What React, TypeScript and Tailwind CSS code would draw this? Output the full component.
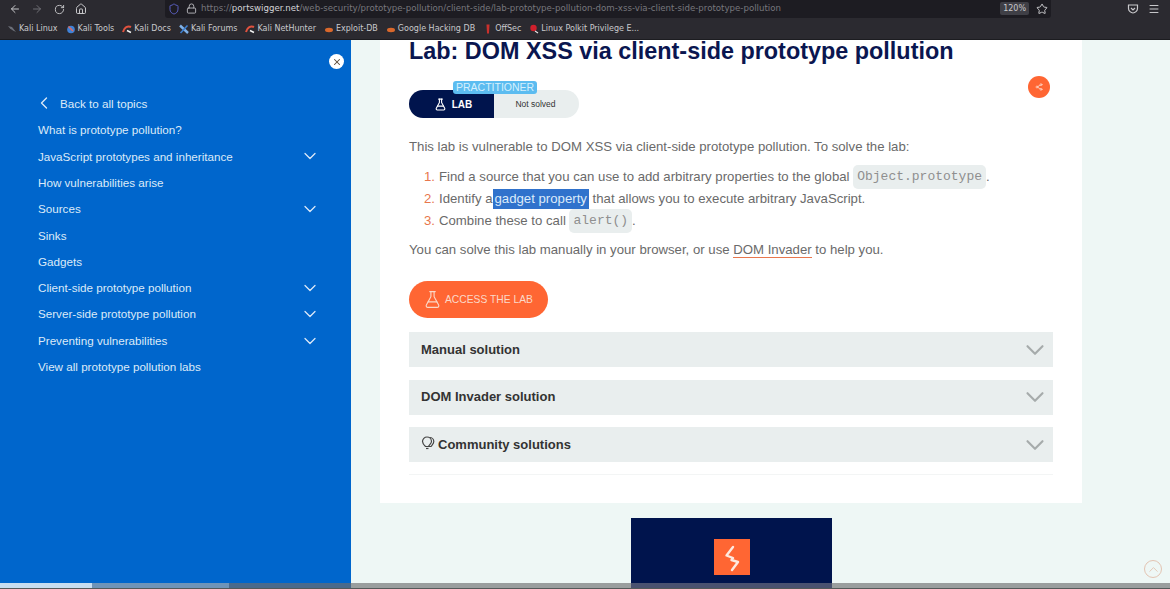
import { ArrowLeft, ArrowRight, RotateCw, Home, Lock, Star, Menu, Shield, ChevronLeft, ChevronDown, ChevronUp, FlaskConical, Share2, X } from "lucide-react";

const bookmarks = [
  { name: "Kali Linux", icon: "dragon" },
  { name: "Kali Tools", icon: "tools" },
  { name: "Kali Docs", icon: "arc" },
  { name: "Kali Forums", icon: "forum" },
  { name: "Kali NetHunter", icon: "arc" },
  { name: "Exploit-DB", icon: "bug" },
  { name: "Google Hacking DB", icon: "bug" },
  { name: "OffSec", icon: "offsec" },
  { name: "Linux Polkit Privilege E...", icon: "polkit" },
];

const topics = [
  { name: "What is prototype pollution?", more: false },
  { name: "JavaScript prototypes and inheritance", more: true },
  { name: "How vulnerabilities arise", more: false },
  { name: "Sources", more: true },
  { name: "Sinks", more: false },
  { name: "Gadgets", more: false },
  { name: "Client-side prototype pollution", more: true },
  { name: "Server-side prototype pollution", more: true },
  { name: "Preventing vulnerabilities", more: true },
  { name: "View all prototype pollution labs", more: false },
];

function Favicon({ icon }: { icon: string }) {
  return (
    <svg width="10" height="10" viewBox="0 0 10 10" fill="none">
      {icon === "dragon" && <path d="M1 2 L5 3 L9 8 L6 6.5 L3 4.5 Z" fill="#6b6f78" />}
      {icon === "tools" && (
        <>
          <circle cx="5" cy="5.5" r="3.8" fill="#3f82d8" />
          <path d="M2.5 2.5 L7 7" stroke="#e26a5a" strokeWidth="1.4" />
        </>
      )}
      {icon === "arc" && (
        <>
          <path d="M1 8 C2 3 6 1.5 9 3" stroke="#e0523f" strokeWidth="2" />
          <path d="M5 6.5 L9 8.5" stroke="#f2f2f2" strokeWidth="1.4" />
        </>
      )}
      {icon === "forum" && (
        <>
          <path d="M1 1.5 L9 9" stroke="#7fb2ea" strokeWidth="2.4" />
          <path d="M8.5 1.5 L1.5 9" stroke="#3d7fd0" strokeWidth="1.6" />
        </>
      )}
      {icon === "bug" && <ellipse cx="5" cy="6" rx="4" ry="2.2" fill="#d9682c" />}
      {icon === "offsec" && <path d="M3.5 0.5 H6.5 L6 9.5 H4 Z" fill="#c9302c" />}
      {icon === "polkit" && (
        <>
          <circle cx="4.5" cy="4" r="3.2" fill="#d0202c" />
          <path d="M6 7 L9 9" stroke="#e8e8e8" strokeWidth="1.2" />
        </>
      )}
    </svg>
  );
}

function Browser() {
  return (
    <div className="relative z-10 h-[40px] shrink-0 bg-[#2b2a30] text-[#c9c9cc] border-b border-[#1c1c20]">
      <div className="h-[18px] flex items-center pl-[9px] pr-[10px]">
        <ArrowLeft size={12} />
        <ArrowRight size={12} className="ml-[10px] text-[#6f6f75]" />
        <RotateCw size={11} className="ml-[11px]" />
        <Home size={12} className="ml-[10px]" />
        <div className="ml-[78px] w-[887px] h-[18px] -mt-[1px] bg-[#1d1c22] rounded-b-[3px] flex items-center pl-[3px] pr-[3px]">
          <Shield size={12} className="text-[#5a5fc0]" />
          <Lock size={11} className="ml-[6px] text-[#b8b8bc]" />
          <span className="ml-[4px] text-[8.65px] text-[#77777d] whitespace-nowrap font-['DejaVu_Sans',sans-serif]">
            https://<span className="text-[#d5d5d8]">portswigger.net</span>/web-security/prototype-pollution/client-side/lab-prototype-pollution-dom-xss-via-client-side-prototype-pollution
          </span>
          <span className="ml-auto bg-[#3f3f46] px-[3px] h-[13px] flex items-center text-[8px] rounded-[2px] font-['DejaVu_Sans',sans-serif]">120%</span>
          <Star size={12} className="ml-[7px]" />
        </div>
        <svg width="12" height="12" viewBox="0 0 12 12" fill="none" stroke="currentColor" strokeWidth="1.2" className="ml-[76px]">
          <path d="M1.5 2 H10.5 V5.5 C10.5 8 8 10 6 10 C4 10 1.5 8 1.5 5.5 Z" />
          <path d="M4 5 L6 7 L8 5" />
        </svg>
        <Menu size={12} className="ml-[9px]" />
      </div>
      <div className="h-[21px] flex items-center pl-[7px] gap-[8px] text-[8px] font-['DejaVu_Sans',sans-serif] whitespace-nowrap">
        {bookmarks.map((b) => (
          <div key={b.name} className="flex items-center gap-[2px]">
            <Favicon icon={b.icon} />
            <span>{b.name}</span>
          </div>
        ))}
      </div>
    </div>
  );
}

function Sidebar() {
  return (
    <aside className="relative w-[351px] shrink-0 bg-[#0066cc] text-[#dceaf8] text-[11.65px] pt-[56px] pl-[38px] pr-[31px]">
      <button className="absolute left-[329px] top-[14px] w-[15px] h-[15px] rounded-full bg-white flex items-center justify-center">
        <X size={10} strokeWidth={2.5} className="text-[#5a4a3a]" />
      </button>
      <div className="h-[16px] flex items-center">
        <ChevronLeft size={20} strokeWidth={1.6} className="-ml-[4.5px] -mt-[3px]" />
        <span className="ml-[6.5px]">Back to all topics</span>
      </div>
      <ul className="mt-[5px] flex flex-col">
        {topics.map((t) => (
          <li key={t.name} className="h-[26.3px] flex items-center justify-between">
            <span>{t.name}</span>
            {t.more && <ChevronDown size={20} strokeWidth={1.5} />}
          </li>
        ))}
      </ul>
    </aside>
  );
}

function Accordion({ label, bulb }: { label: string; bulb?: boolean }) {
  return (
    <div className="h-[35px] bg-[#e9eeee] pl-[12px] pr-[3px] flex items-center justify-between text-[#333333] font-bold text-[13px]">
      <span className="flex items-center gap-[3px]">
        {bulb && (
          <svg width="14" height="14" viewBox="0 0 14 14" fill="none" stroke="#444444" strokeWidth="1.2" className="-mt-[4px]">
            <path d="M4.5 10.5 C3 9 1.5 7.5 1.5 5.5 C1.5 3 3.5 1 6 1 C8.5 1 10.5 3 10.5 5.5 C10.5 7.5 8 9 7.5 10.5 Z" />
            <path d="M8.5 1.5 C11 1.5 12.8 3.3 12.8 5.5 C12.8 7.5 11 9 10 10.5 H7.5" />
            <path d="M5 12.5 H7.5" />
          </svg>
        )}
        {label}
      </span>
      <ChevronDown size={30} strokeWidth={1.7} className="text-[#a6abab]" />
    </div>
  );
}

function Code({ children }: { children: string }) {
  return (
    <code className="inline-block bg-[#e9eeee] text-[#8f8f8f] rounded-[5px] px-[4px] h-[24px] leading-[24px] text-[13px] font-['Liberation_Mono',monospace]">
      {children}
    </code>
  );
}

function Card() {
  return (
    <section className="relative w-[702px] ml-[29px] h-[463px] bg-white pl-[29px] pr-[29px] text-[13.2px] text-[#6a6a6a]">
      <h1 className="text-[23.4px] leading-[22px] font-bold text-[#0a1650] whitespace-nowrap">
        Lab: DOM XSS via client-side prototype pollution
      </h1>
      <button className="absolute right-[32px] top-[36px] w-[22px] h-[22px] rounded-full bg-[#ff6633] flex items-center justify-center">
        <Share2 size={8} className="text-[#fde4da]" />
      </button>

      <div className="relative mt-[28px] h-[28px] w-[170px] flex text-[8.5px]">
        <span className="absolute left-[44px] -top-[9px] h-[13px] px-[3px] bg-[#5cbcf0] text-[#d6f0fd] rounded-[3px] text-[10.5px] leading-[13px]">
          PRACTITIONER
        </span>
        <div className="w-[85px] bg-[#00144d] text-white rounded-l-full flex items-center justify-center gap-[5px] font-bold text-[10px] pl-[3px]">
          <FlaskConical size={13} />
          LAB
        </div>
        <div className="w-[85px] bg-[#e9eeee] text-[#333333] rounded-r-full flex items-center justify-center pr-[2px]">
          Not solved
        </div>
      </div>

      <p className="mt-[19px] leading-[20px]">This lab is vulnerable to DOM XSS via client-side prototype pollution. To solve the lab:</p>
      <ol className="mt-[8px] pl-[15px] flex flex-col">
        <li className="h-[24px] flex items-center whitespace-pre">
          <span className="text-[#e8774d] w-[15px]">1.</span>
          Find a source that you can use to add arbitrary properties to the global <Code>Object.prototype</Code>.
        </li>
        <li className="h-[20px] flex items-center whitespace-pre">
          <span className="text-[#e8774d] w-[15px]">2.</span>
          Identify a<span className="bg-[#3072cc] text-[#dcebfa] px-[2px]">gadget property</span> that allows you to execute arbitrary JavaScript.
        </li>
        <li className="h-[24px] flex items-center whitespace-pre">
          <span className="text-[#e8774d] w-[15px]">3.</span>
          Combine these to call <Code>alert()</Code>.
        </li>
      </ol>
      <p className="mt-[7px] leading-[20px]">
        You can solve this lab manually in your browser, or use{" "}
        <span className="border-b border-[#e8774d]">DOM Invader</span> to help you.
      </p>

      <button className="mt-[21px] w-[139px] h-[37px] rounded-full bg-[#ff6633] text-[#fbd9c8] text-[10.3px] flex items-center pl-[14px] gap-[3px]">
        <FlaskConical size={19} strokeWidth={1.4} />
        ACCESS THE LAB
      </button>

      <div className="mt-[14px] flex flex-col gap-[12.5px]">
        <Accordion label="Manual solution" />
        <Accordion label="DOM Invader solution" />
        <Accordion label="Community solutions" bulb />
      </div>
      <div className="mt-[12px] h-px bg-[#f3f5f5]" />
    </section>
  );
}

function Sponsor() {
  return (
    <div className="mt-[15px] ml-[280px] w-[201px] h-[71px] bg-[#00144d] flex justify-center pt-[21px] shrink-0">
      <div className="w-[36px] h-[36px] bg-[#ff6633]">
        <svg width="36" height="36" viewBox="0 0 36 36" fill="none" stroke="#fde9df" strokeWidth="2.4" strokeLinejoin="round" strokeLinecap="round">
          <path d="M19 8 L12.5 16.5 L19 19 L17.5 21 L24 23 L18 31" />
        </svg>
      </div>
    </div>
  );
}

export default function App() {
  return (
    <div className="relative w-[1170px] h-[589px] flex flex-col overflow-hidden bg-[#eef7f5] font-['Liberation_Sans',Arial,sans-serif]">
      <Browser />
      <main className="flex flex-1 min-h-0">
        <Sidebar />
        <div className="flex-1 min-w-0">
          <Card />
          <Sponsor />
        </div>
      </main>
      {/* player progress bar lying over the bottom of the page */}
      <div className="absolute left-0 right-0 bottom-0 h-[6px] flex border-b border-[#555a5a]">
        <div className="w-[92px] bg-[#c8ddf0]" />
        <div className="w-[137px] bg-[#6f94b8]" />
        <div className="w-[122px] bg-[#4a6a8c]" />
        <div className="w-[280px] bg-[#9a9e9e]" />
        <div className="w-[201px] bg-[#4a5270]" />
        <div className="flex-1 bg-[#9a9e9e]" />
      </div>
      <button className="absolute left-[1144px] top-[560px] w-[18px] h-[18px] rounded-full border border-[#e3c4b2] flex items-center justify-center">
        <ChevronUp size={15} strokeWidth={1.5} className="text-[#e3c4b2]" />
      </button>
    </div>
  );
}
